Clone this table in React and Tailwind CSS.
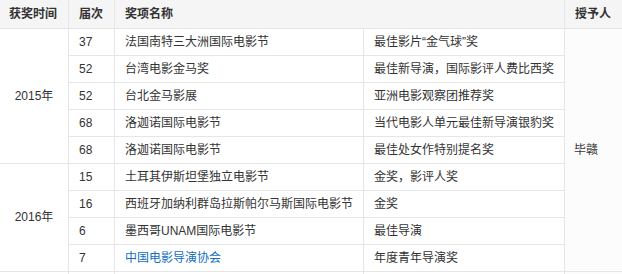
const rows2015 = [
  ["37", "法国南特三大洲国际电影节", "最佳影片“金气球”奖"],
  ["52", "台湾电影金马奖", "最佳新导演，国际影评人费比西奖"],
  ["52", "台北金马影展", "亚洲电影观察团推荐奖"],
  ["68", "洛迦诺国际电影节", "当代电影人单元最佳新导演银豹奖"],
  ["68", "洛迦诺国际电影节", "最佳处女作特别提名奖"],
];

const rows2016 = [
  ["15", "土耳其伊斯坦堡独立电影节", "金奖，影评人奖"],
  ["16", "西班牙加纳利群岛拉斯帕尔马斯国际电影节", "金奖"],
  ["6", "墨西哥UNAM国际电影节", "最佳导演"],
  ["7", "中国电影导演协会", "年度青年导演奖", true],
];

const td = "h-[27px] py-0 pl-[10px] pr-2 border border-[#e6e6e6] align-middle whitespace-nowrap";

export default function App() {
  return (
    <div className="w-[622px] h-[274px] overflow-hidden bg-white">
      <table
        className="w-[640px] table-fixed border-collapse text-[12px] text-[#333] -ml-px"
        style={{ fontFamily: '"Liberation Sans", "Noto Sans CJK SC", sans-serif' }}
      >
        <colgroup>
          <col className="w-[69px]" />
          <col className="w-[46px]" />
          <col className="w-[249px]" />
          <col className="w-[201px]" />
          <col className="w-[75px]" />
        </colgroup>
        <thead>
          <tr className="bg-[#f5f5f5]">
            <th className="h-[28px] pl-[9px] text-left font-bold border border-t-0 border-[#e6e6e6]">获奖时间</th>
            <th className="h-[28px] pl-[10px] text-left font-bold border border-t-0 border-[#e6e6e6]">届次</th>
            <th colSpan={2} className="h-[28px] pl-[10px] text-left font-bold border border-t-0 border-[#e6e6e6]">奖项名称</th>
            <th className="h-[28px] pl-[10px] text-left font-bold border border-t-0 border-[#e6e6e6]">授予人</th>
          </tr>
        </thead>
        <tbody>
          {rows2015.map((r, i) => (
            <tr key={"a" + i}>
              {i === 0 && (
                <td rowSpan={5} className={td + " text-center !pl-0 !pr-0"}>2015年</td>
              )}
              <td className={td}>{r[0]}</td>
              <td className={td}>{r[1]}</td>
              <td className={td}>{r[2]}</td>
              {i === 0 && (
                <td rowSpan={9} className={td + " bg-[#fcfcfc] !pl-[9px]"}>毕赣</td>
              )}
            </tr>
          ))}
          {rows2016.map((r, i) => (
            <tr key={"b" + i}>
              {i === 0 && (
                <td rowSpan={4} className={td + " text-center !pl-0 !pr-0"}>2016年</td>
              )}
              <td className={td}>{r[0]}</td>
              <td className={td + (r[3] ? " text-[#136ec2]" : "")}>{r[1]}</td>
              <td className={td}>{r[2]}</td>
            </tr>
          ))}
          <tr>
            <td className={td}>&nbsp;</td>
            <td className={td}>&nbsp;</td>
            <td className={td}>&nbsp;</td>
            <td className={td}>&nbsp;</td>
            <td className={td + " bg-[#fcfcfc]"}>&nbsp;</td>
          </tr>
        </tbody>
      </table>
    </div>
  );
}
